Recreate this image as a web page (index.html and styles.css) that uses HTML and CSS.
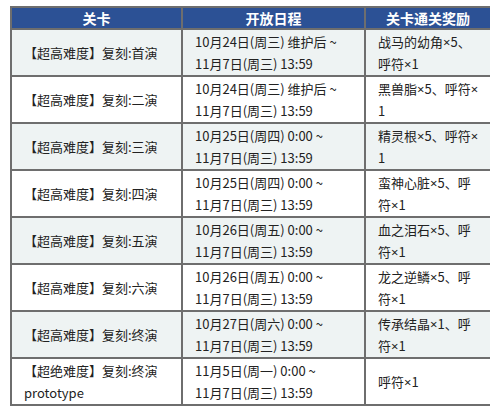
FILE: index.html
```html
<!DOCTYPE html>
<html lang="zh-CN">
<head>
<meta charset="utf-8">
<title>复刻关卡</title>
<link rel="stylesheet" href="styles.css">
</head>
<body>
<table class="quest-table">
  <colgroup>
    <col class="c1">
    <col class="c2">
    <col class="c3">
  </colgroup>
  <thead>
    <tr><th>关卡</th><th>开放日程</th><th>关卡通关奖励</th></tr>
  </thead>
  <tbody>
    <tr class="alt">
      <td>【超高难度】复刻:首演</td>
      <td>10月24日(周三) 维护后 ~<br>11月7日(周三) 13:59</td>
      <td>战马的幼角<span class="x">×</span>5、<br>呼符<span class="x">×</span>1</td>
    </tr>
    <tr>
      <td>【超高难度】复刻:二演</td>
      <td>10月24日(周三) 维护后 ~<br>11月7日(周三) 13:59</td>
      <td>黑兽脂<span class="x">×</span>5、呼符<span class="x">×</span><br>1</td>
    </tr>
    <tr class="alt">
      <td>【超高难度】复刻:三演</td>
      <td>10月25日(周四) 0:00 ~<br>11月7日(周三) 13:59</td>
      <td>精灵根<span class="x">×</span>5、呼符<span class="x">×</span><br>1</td>
    </tr>
    <tr>
      <td>【超高难度】复刻:四演</td>
      <td>10月25日(周四) 0:00 ~<br>11月7日(周三) 13:59</td>
      <td>蛮神心脏<span class="x">×</span>5、呼<br>符<span class="x">×</span>1</td>
    </tr>
    <tr class="alt">
      <td>【超高难度】复刻:五演</td>
      <td>10月26日(周五) 0:00 ~<br>11月7日(周三) 13:59</td>
      <td>血之泪石<span class="x">×</span>5、呼<br>符<span class="x">×</span>1</td>
    </tr>
    <tr>
      <td>【超高难度】复刻:六演</td>
      <td>10月26日(周五) 0:00 ~<br>11月7日(周三) 13:59</td>
      <td>龙之逆鳞<span class="x">×</span>5、呼<br>符<span class="x">×</span>1</td>
    </tr>
    <tr class="alt">
      <td>【超高难度】复刻:终演</td>
      <td>10月27日(周六) 0:00 ~<br>11月7日(周三) 13:59</td>
      <td>传承结晶<span class="x">×</span>1、呼<br>符<span class="x">×</span>1</td>
    </tr>
    <tr>
      <td>【超绝难度】复刻:终演<br>prototype</td>
      <td>11月5日(周一) 0:00 ~<br>11月7日(周三) 13:59</td>
      <td>呼符<span class="x">×</span>1</td>
    </tr>
  </tbody>
</table>
</body>
</html>
```

FILE: styles.css
```css
html, body {
  background: #ffffff;
}
body {
  margin: 6px 10px;
  font-family: "Noto Sans CJK SC", sans-serif;
  font-size: 13px;
  color: #222222;
}
.quest-table {
  width: 480px;
  table-layout: fixed;
  border-collapse: collapse;
  border: 2px solid #7a7a7a;
}
.c1 { width: 171px; }
.c2 { width: 183px; }
.c3 { width: 126px; }
.quest-table th {
  background: #2c5195;
  color: #ffffff;
  font-weight: bold;
  font-size: 14px;
  height: 20px;
  padding: 0;
  line-height: 20px;
  text-align: center;
  border: 2px solid #6e6e6e;
}
.quest-table td {
  height: 45px;
  padding: 0 12px;
  line-height: 22px;
  text-align: left;
  vertical-align: middle;
  white-space: nowrap;
  border: 2px solid #6e6e6e;
}
.quest-table tr.alt td {
  background: #eef3f3;
}
.x {
  font-family: "Noto Sans", "DejaVu Sans", sans-serif;
  line-height: 0;
}
```
